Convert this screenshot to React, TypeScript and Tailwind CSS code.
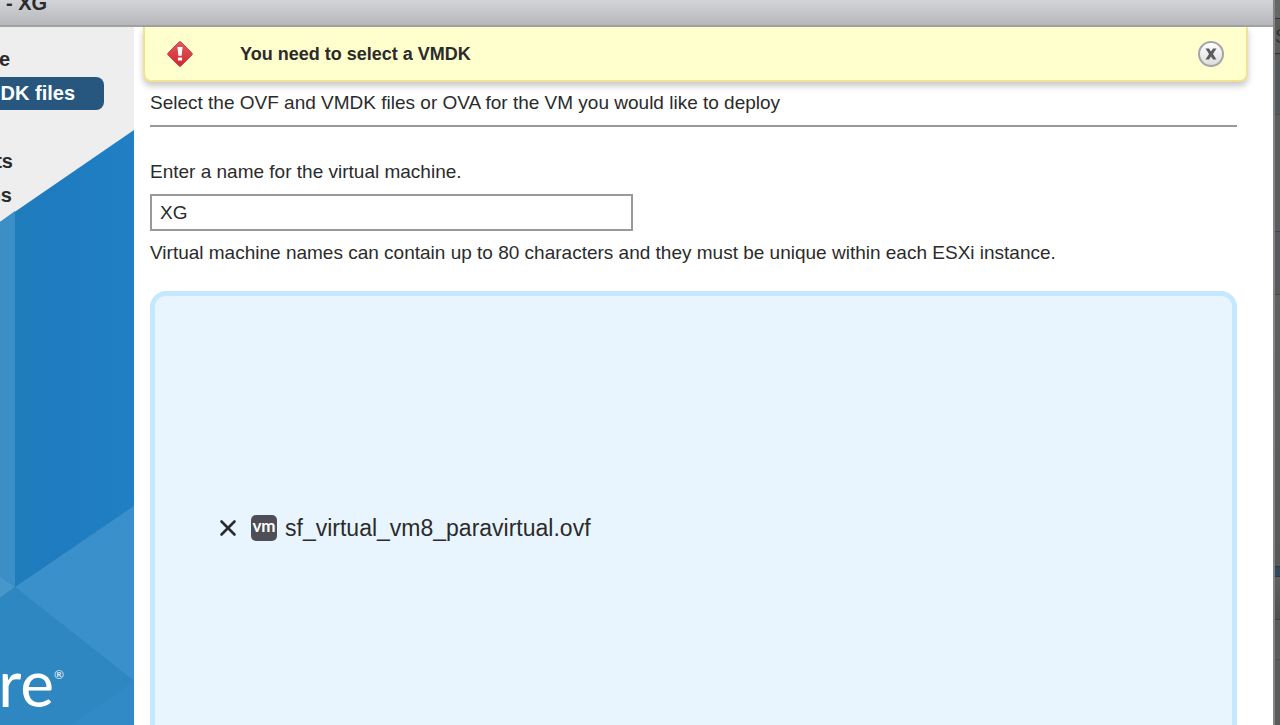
import { X } from "lucide-react";

const steps = [
  { label: "e", width: "w-2.5" },
  { label: "MDK files", selected: true },
  { label: "" },
  { label: "ts", width: "w-[13px]" },
  { label: "ns", width: "w-3" },
];

function SidebarArt() {
  return (
    <svg
      className="absolute inset-0 h-full w-full"
      viewBox="0 0 134 698"
      preserveAspectRatio="none"
      aria-hidden="true"
    >
      <defs>
        <linearGradient id="panel" x1="0" x2="1" y1="0" y2="0">
          <stop offset="0.1" stopColor="#207dbb" />
          <stop offset="0.4" stopColor="#1f7bc0" />
          <stop offset="1" stopColor="#2080c3" />
        </linearGradient>
      </defs>
      <path d="M0 195 134 103V698H0Z" fill="url(#panel)" />
      <path d="M0 195 15 184V560L0 549Z" fill="#3b8ec6" />
      <path d="M0 549 15 560 0 571Z" fill="#4797ca" />
      <path d="M0 571 15 560 134 654V698H0Z" fill="#2e87c1" />
      <path d="M15 560 134 479V654Z" fill="#3a90ca" />
      <path d="M134 654V698H70Z" fill="#318ac5" />
    </svg>
  );
}

function Sidebar() {
  return (
    <nav className="relative flex w-[134px] shrink-0 flex-col overflow-hidden bg-[#eeeeee] pt-4">
      <SidebarArt />
      <ul className="relative text-[20px] leading-[33px] font-bold">
        {steps.map((step, i) => (
          <li key={i} className="flex h-[34px]">
            {step.selected ? (
              <a
                href="#files"
                className="flex h-[33px] w-[104px] justify-end overflow-hidden rounded-r-lg bg-[#27577f] pr-[29px] whitespace-nowrap text-white"
              >
                {step.label}
              </a>
            ) : (
              step.label && (
                <a
                  href="#step"
                  className={`flex justify-end overflow-hidden whitespace-nowrap ${step.width}`}
                >
                  {step.label}
                </a>
              )
            )}
          </li>
        ))}
      </ul>
      {/* Logo */}
      <div className="relative mt-auto flex w-16 items-start justify-end pb-2.5 font-[Lato] text-white">
        <span className="text-[64px] leading-[64px]">are</span>
        <span className="pt-4 text-[12px] leading-[16px]">®</span>
      </div>
    </nav>
  );
}

function Alert() {
  return (
    <div
      role="alert"
      className="mr-[25px] ml-[9px] flex h-[55px] items-center rounded-b-lg border-2 border-t-0 border-[#f2e394] bg-[#fffecd] px-[22px] shadow-[0_4px_6px_rgba(0,0,0,0.22)]"
    >
      <svg className="h-[26px] w-[26px] shrink-0" viewBox="0 0 26 26" aria-hidden="true">
        <defs>
          <linearGradient id="warn" x1="0" x2="0" y1="0" y2="1">
            <stop offset="0" stopColor="#e25a5e" />
            <stop offset="1" stopColor="#cb2831" />
          </linearGradient>
        </defs>
        <path
          d="M11.8 1.2a1.7 1.7 0 0 1 2.4 0L24.8 11.8a1.7 1.7 0 0 1 0 2.4L14.2 24.8a1.7 1.7 0 0 1-2.4 0L1.2 14.2a1.7 1.7 0 0 1 0-2.4Z"
          fill="url(#warn)"
          stroke="#d8484b"
        />
        <path d="M10.4 6h5.2l-1 8.8h-3.2Z" fill="#fff" />
        <rect x="10.9" y="16.4" width="4.2" height="3.2" rx="0.6" fill="#fff" />
      </svg>
      <p className="flex-1 pl-[47px] text-[18px] leading-6 font-bold">You need to select a VMDK</p>
      <button
        type="button"
        aria-label="Close"
        className="flex h-[26px] w-[26px] items-center justify-center rounded-full border-2 border-[#a5a5a5] bg-linear-to-b from-white to-[#dddddd]"
      >
        <svg width="12" height="12" viewBox="0 0 12 12" aria-hidden="true">
          <path d="M0.5 0.5H4L6 3.6 8 0.5H11.5L8 6 11.5 11.5H8L6 8.4 4 11.5H0.5L4 6Z" fill="#5c5c5c" />
        </svg>
      </button>
    </div>
  );
}

function Backdrop() {
  return (
    <div className="flex w-[7px] shrink-0 flex-col overflow-hidden border-l-2 border-[#858585] bg-[#5b5b5b]" aria-hidden="true">
      <div className="h-[18px] bg-[#666666]" />
      <div className="flex h-9 items-center border-y border-[#333333] text-[20px] text-[#333333]">S</div>
      <div className="h-[61px] border-y border-[#4d4d4d] bg-[#55585b]" />
      <div className="h-[117px] border-b border-[#444444] bg-[#5a5c5e]" />
      <div className="h-[63px] border-b border-[#444444] bg-[#57595c]" />
      <div className="h-[271px] bg-linear-to-b from-[#60605f] to-[#585858]" />
      <div className="h-[11px] border-y border-[#303a42] bg-[#33485a]" />
      <div className="h-[43px] border-b border-[#404040] bg-linear-to-b from-[#60605f] to-[#4e4e4e]" />
      <div className="h-10 border-b border-[#505050]" />
    </div>
  );
}

export default function App() {
  return (
    <div className="flex h-screen overflow-hidden bg-white font-['Liberation_Sans',Arial,sans-serif] text-[#2b2b2b]">
      <div className="flex min-w-0 flex-1 flex-col">
        <header className="flex h-[27px] shrink-0 items-start overflow-hidden border-b-2 border-[#a2a2a4] bg-linear-to-b from-[#d3d4d8] to-[#b7b8bc] pl-1.5">
          <h1 className="-mt-2 text-[20px] leading-[22px] font-bold">- XG</h1>
        </header>
        <div className="flex min-h-0 flex-1">
          <Sidebar />
          <main className="flex min-w-0 flex-1 flex-col">
            <Alert />
            <div className="flex flex-1 flex-col pr-9 pl-4 text-[19px] leading-6">
              <p className="border-b-2 border-[#999999] pt-[9px] pb-2.5">
                Select the OVF and VMDK files or OVA for the VM you would like to deploy
              </p>
              <label htmlFor="vm-name" className="pt-[33px]">
                Enter a name for the virtual machine.
              </label>
              <input
                id="vm-name"
                type="text"
                defaultValue="XG"
                className="mt-2.5 h-[37px] w-[483px] border-2 border-[#999999] bg-white px-2 outline-none"
              />
              <p className="pt-2.5">
                Virtual machine names can contain up to 80 characters and they must be unique within each ESXi instance.
              </p>
              <section className="mt-[26px] flex-1 rounded-t-2xl border-[5px] border-b-0 border-[#c4e9ff] bg-[#e8f5fe] pt-[212px] pl-15">
                <div className="flex h-10 items-center">
                  <button type="button" aria-label="Remove file">
                    <X size={26} strokeWidth={2.4} />
                  </button>
                  <span className="mr-2 ml-2.5 flex h-[26px] w-[26px] items-center justify-center rounded-[5px] bg-[#4d4e56] pb-1 font-[Lato] text-[17px] leading-5 font-bold text-white">
                    vm
                  </span>
                  <span className="text-[23px] leading-8">sf_virtual_vm8_paravirtual.ovf</span>
                </div>
              </section>
            </div>
          </main>
        </div>
      </div>
      <Backdrop />
    </div>
  );
}
